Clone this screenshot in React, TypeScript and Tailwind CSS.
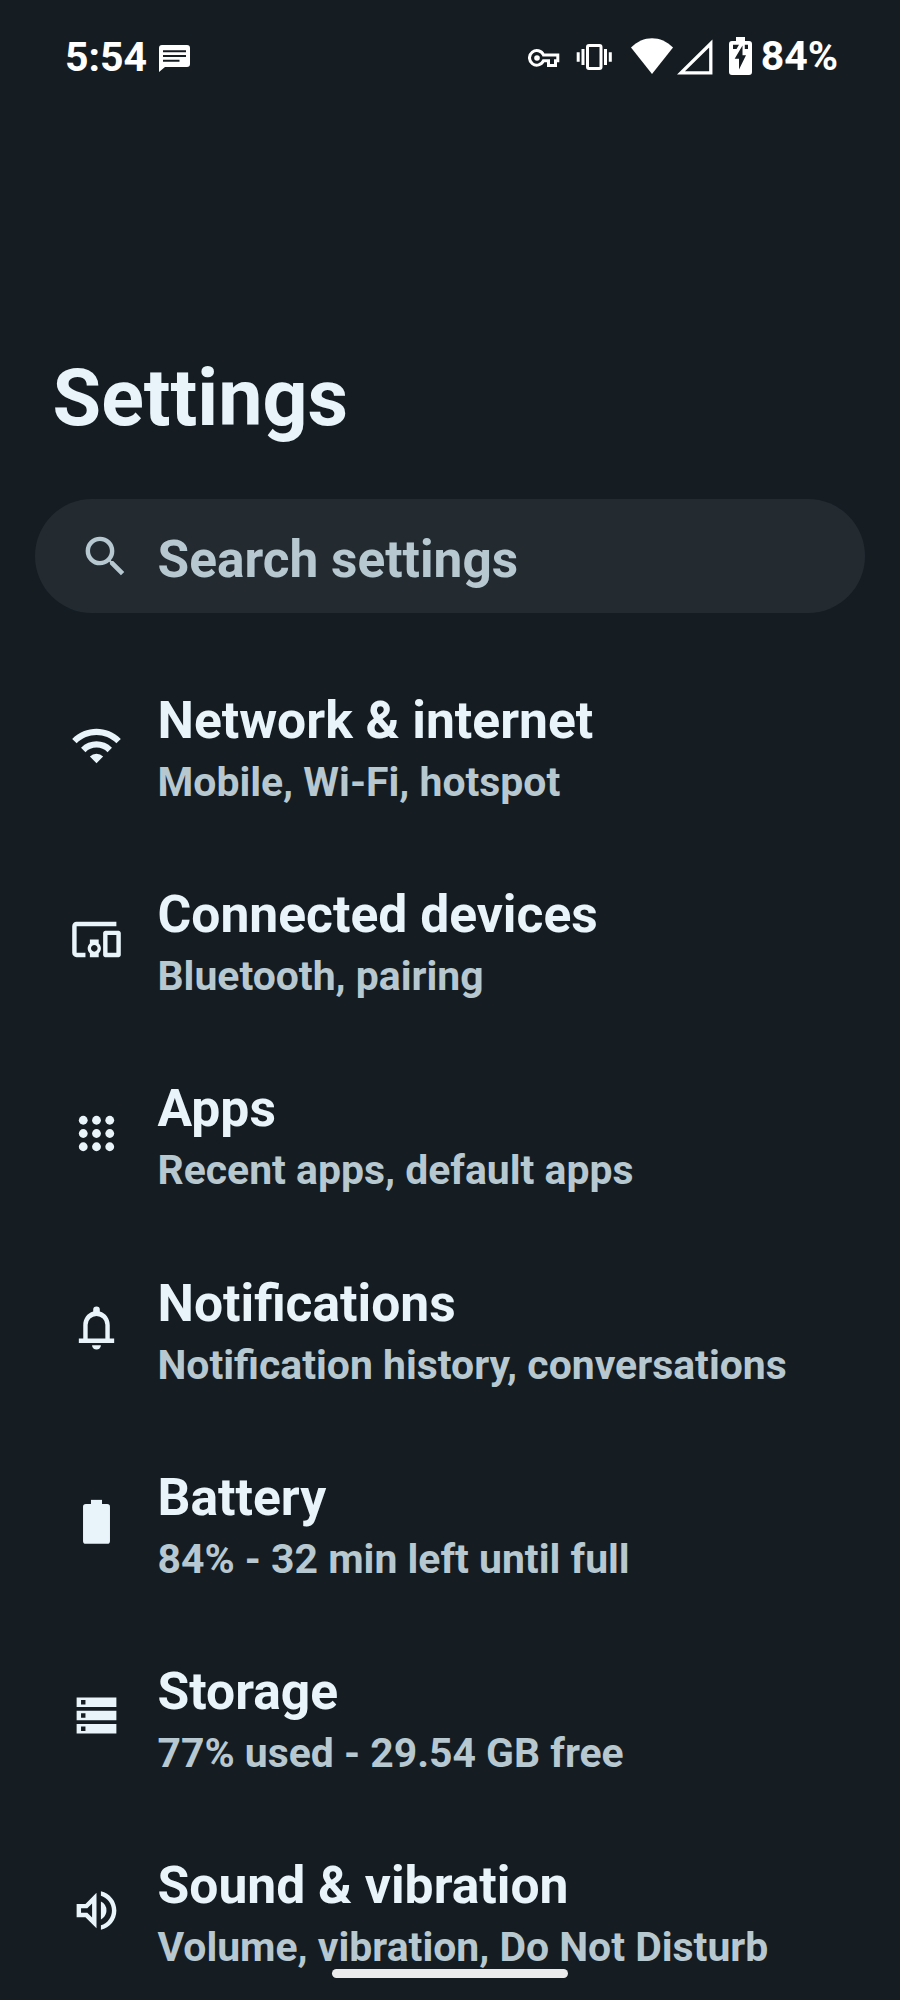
import type { ReactNode } from 'react'
import { MdDevicesOther, MdOutlineVolumeUp, MdSearch, MdWifi } from 'react-icons/md'

const iconClass = 'w-[53px] h-[53px]'

function AppsIcon() {
  return (
    <svg viewBox="0 0 24 24" fill="currentColor" className={iconClass}>
      {[6, 12, 18].map((y) => [6, 12, 18].map((x) => <circle key={`${x}-${y}`} cx={x} cy={y} r="2" />))}
    </svg>
  )
}

function BellIcon() {
  return (
    <svg viewBox="0 0 24 24" fill="currentColor" fillRule="evenodd" className={iconClass}>
      <path d="M4 19v-2h2v-6c0-3 1.75-5.55 4.5-6.25V4a1.5 1.5 0 0 1 3 0v.75C16.25 5.45 18 8 18 11v6h2v2H4zm4-2h8v-6.2a4 4 0 0 0-8 0V17z" />
      <path d="M10 20h4a2 2 0 0 1-4 0z" />
    </svg>
  )
}

function BatteryIcon() {
  return (
    <svg viewBox="0 0 24 24" fill="currentColor" className={iconClass}>
      <rect x="9.5" y="2.2" width="5" height="3" />
      <rect x="5.9" y="4.1" width="12.2" height="18" rx="1.3" />
    </svg>
  )
}

function StorageIcon() {
  return (
    <svg viewBox="0 0 24 24" fill="currentColor" fillRule="evenodd" className={iconClass}>
      <path d="M3 3.9h18v4.2H3zM5 5v2h2V5zM3 9.9h18v4.2H3zM5 11v2h2v-2zM3 15.9h18v4.2H3zM5 17v2h2v-2z" />
    </svg>
  )
}

const items: { title: string; summary: string; icon: ReactNode }[] = [
  { title: 'Network & internet', summary: 'Mobile, Wi-Fi, hotspot', icon: <MdWifi className={iconClass} /> },
  { title: 'Connected devices', summary: 'Bluetooth, pairing', icon: <MdDevicesOther className={iconClass} /> },
  { title: 'Apps', summary: 'Recent apps, default apps', icon: <AppsIcon /> },
  { title: 'Notifications', summary: 'Notification history, conversations', icon: <BellIcon /> },
  { title: 'Battery', summary: '84% - 32 min left until full', icon: <BatteryIcon /> },
  { title: 'Storage', summary: '77% used - 29.54 GB free', icon: <StorageIcon /> },
  { title: 'Sound & vibration', summary: 'Volume, vibration, Do Not Disturb', icon: <MdOutlineVolumeUp className={iconClass} /> },
]

function StatusBar() {
  return (
    <header className="flex h-[112px] shrink-0 items-center pl-[65px] pr-[62px] text-white">
      <span className="pt-px text-[41px] leading-[48px] font-bold">5:54</span>
      {/* Message */}
      <svg viewBox="0 0 31 27" className="ml-3 mt-[5px] h-[27px] w-[31px]">
        <path fill="currentColor" d="M3 0h25a3 3 0 0 1 3 3v16a3 3 0 0 1-3 3H6l-6 5V3a3 3 0 0 1 3-3z" />
        <path stroke="#151d23" strokeWidth="2" d="M4 6.3h23M4 11h23M4 15.7h16.5" />
      </svg>
      <div className="ml-auto flex items-center">
        {/* VPN key */}
        <svg viewBox="0 0 32 20" fill="none" stroke="currentColor" strokeWidth="3" className="mt-[3px] h-5 w-8">
          <path d="M15.5 7H29.8V12.7H27.5V17.5H20.5V12.7H15.5A7.3 7.3 0 1 1 15.5 7Z" />
          <circle cx="9" cy="10" r="2.8" fill="currentColor" stroke="none" />
        </svg>
        {/* Vibrate */}
        <svg viewBox="0 0 36 26" fill="none" stroke="currentColor" strokeWidth="3" className="ml-4 mt-px h-[26px] w-9">
          <rect x="11.5" y="1.5" width="13.5" height="23" rx="1.5" />
          <path d="M2.2 8.3v9.4M7 5v16M29.5 5v16M34.3 8.3v9.4" />
        </svg>
        {/* Wi-Fi signal */}
        <svg viewBox="0 0 42 36" fill="currentColor" className="ml-[19px] h-9 w-[42px]">
          <path d="M0 9.5C12-3 30-3 42 9.5L21 36z" />
        </svg>
        {/* Mobile signal */}
        <svg viewBox="0 0 36 36" fill="none" stroke="currentColor" strokeWidth="3.3" className="ml-1 mt-px h-9 w-9">
          <path d="M4 33.8H33.8V4.5z" />
        </svg>
        {/* Charging battery */}
        <svg viewBox="0 0 23 38" className="ml-4 h-[38px] w-[23px]">
          <path fill="currentColor" d="M7 0h9v4h4a3 3 0 0 1 3 3v28a3 3 0 0 1-3 3H3a3 3 0 0 1-3-3V7a3 3 0 0 1 3-3h4z" />
          <path fill="#151d23" d="M4 7.7H10L7.5 12H4zM15.8 7.7H19V12H15.8zM13.5 8.5V18.3H17L10 32.5V21.7H5.7z" />
        </svg>
        <span className="ml-[9px] text-[41px] leading-[48px] font-bold">84%</span>
      </div>
    </header>
  )
}

export default function App() {
  return (
    <div className="relative flex h-[2000px] w-[900px] flex-col overflow-hidden bg-[#151d23] font-['Roboto',sans-serif] text-[#e8f4fa]">
      <StatusBar />

      <h1 className="mt-[238px] ml-[52.5px] text-[79px] leading-[96px] font-bold">Settings</h1>

      {/* Search */}
      <div className="mx-[35px] mt-[53px] flex h-[114px] shrink-0 items-center rounded-full bg-[#232b31] pl-11 text-[#b7c8d1]">
        <MdSearch className="h-[53px] w-[53px]" />
        <span className="ml-[25.5px] pt-[7px] text-[51.4px] leading-[60px] font-bold">Search settings</span>
      </div>

      <main className="mt-[35px]">
        {items.map((item) => (
          <div key={item.title} className="flex h-[194.17px] items-center pl-[70px]">
            {item.icon}
            <div className="ml-[34.5px] pt-[7px] whitespace-nowrap">
              <p className="text-[51.6px] leading-[60px] font-bold">{item.title}</p>
              <p className="mt-2 text-[40.9px] leading-[47px] font-bold text-[#b7c8d1]">{item.summary}</p>
            </div>
          </div>
        ))}
      </main>

      {/* Gesture bar */}
      <div className="absolute bottom-[22px] left-[332px] h-[9px] w-[236px] rounded-full bg-[#ececec]" />
    </div>
  )
}
